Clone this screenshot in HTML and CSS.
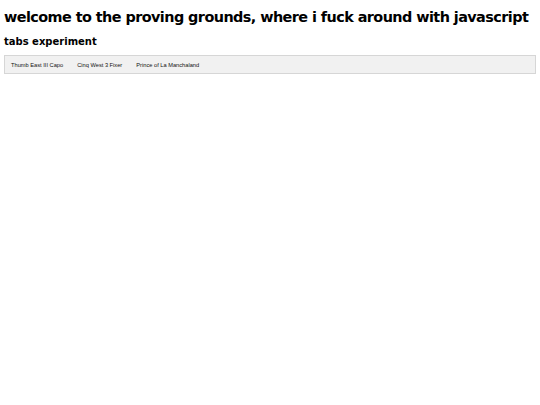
FILE: index.html
```html
<!DOCTYPE html>
<html>
<head>
<meta charset="utf-8">
<link rel="stylesheet" href="styles.css">
</head>
<body>
<h1 class="title">welcome to the proving grounds, where i fuck around with javascript</h1>
<h2 class="subtitle">tabs experiment</h2>
<div class="tab">
  <button class="tablinks">Thumb East III Capo</button>
  <button class="tablinks">Cinq West 3 Fixer</button>
  <button class="tablinks">Prince of La Manchaland</button>
</div>
</body>
</html>
```
FILE: styles.css
```css
html, body { margin: 0; padding: 0; background: #fff; }
body { padding: 4px; font-family: "DejaVu Sans", sans-serif; color: #000; }
.title { font-size: 14.4px; font-weight: bold; margin: 4px 0 9.5px; line-height: 18px; letter-spacing: -0.56px; white-space: nowrap; }
.subtitle { font-size: 10px; font-weight: bold; margin: 0 0 7.5px; line-height: 12px; }
.tab { display: flex; border: 1px solid #d6d6d6; background: #f1f1f1; overflow: hidden; }
.tablinks { background: inherit; border: none; outline: none; padding: 6px 7px 5px; font-family: "Liberation Sans", Arial, sans-serif; font-size: 5.7px; line-height: 6px; color: #111; cursor: pointer; }
.tablinks:first-child { padding-left: 6px; }
```
